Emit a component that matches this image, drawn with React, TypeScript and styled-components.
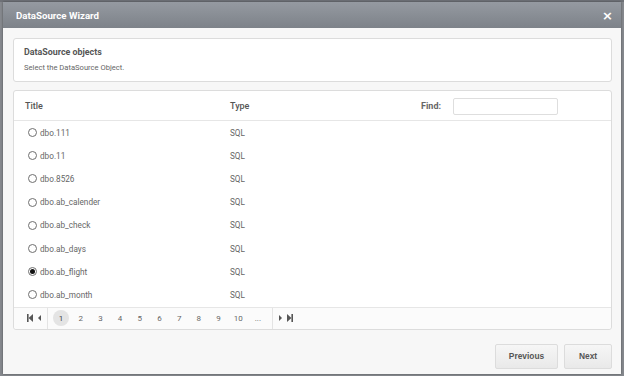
import React, { useState } from 'react';
import styled, { createGlobalStyle } from 'styled-components';

const GlobalStyle = createGlobalStyle`
  html, body {
    margin: 0;
    padding: 0;
    width: 624px;
    height: 376px;
    overflow: hidden;
    background: #7b7f85;
    font-family: Roboto, "Noto Sans", Arial, sans-serif;
  }
`;

const Backdrop = styled.div`
  width: 624px;
  height: 376px;
  padding: 2px 3px 2px 3px;
  box-sizing: border-box;
  background: linear-gradient(#6e7177 0, #6e7177 2px, #85888d 2px);
`;

const Modal = styled.div`
  height: 100%;
  display: flex;
  flex-direction: column;
  background: #f7f7f7;
  box-shadow: 0 0 2px rgba(0, 0, 0, 0.4);
`;

const Header = styled.div`
  height: 26px;
  flex-shrink: 0;
  display: flex;
  align-items: center;
  justify-content: space-between;
  padding: 0 8px 0 13px;
  background: linear-gradient(#959aa1, #7d8289);
  color: #fff;
`;

const HeaderTitle = styled.div`
  font-size: 9.7px;
  font-weight: 700;
`;

const CloseButton = styled.button`
  border: none;
  background: none;
  padding: 0;
  color: #fff;
  font-size: 13px;
  font-weight: 700;
  line-height: 1;
  cursor: pointer;
  font-family: "DejaVu Sans", sans-serif;
`;

const Body = styled.div`
  display: flex;
  flex-direction: column;
  gap: 8px;
  padding: 10px 9px 0 10px;
`;

const Panel = styled.div`
  background: #fff;
  border: 1px solid #dcdcdc;
  border-radius: 3px;
`;

const InfoPanel = styled(Panel)`
  height: 44px;
  padding: 8px 10px 0;
  box-sizing: border-box;
`;

const InfoTitle = styled.div`
  font-size: 8.9px;
  font-weight: 700;
  color: #555;
`;

const InfoText = styled.div`
  font-size: 7.6px;
  color: #666;
  margin-top: 6px;
`;

const TablePanel = styled(Panel)`
  display: flex;
  flex-direction: column;
`;

const TableHead = styled.div`
  height: 30px;
  display: grid;
  grid-template-columns: 205px 1fr auto;
  align-items: center;
  padding: 1px 53px 0 11px;
  box-sizing: border-box;
  border-bottom: 1px solid #e6e6e6;
  font-size: 9px;
  font-weight: 500;
  color: #555;
`;

const FindBox = styled.label`
  display: flex;
  align-items: center;
  gap: 12px;
  font-weight: 700;
  color: #666;
`;

const FindInput = styled.input`
  width: 105px;
  height: 17px;
  box-sizing: border-box;
  border: 1px solid #dedede;
  border-radius: 2px;
  padding: 0 4px;
  font-size: 9px;
  outline: none;
`;

const Row = styled.label`
  height: 23.2px;
  display: grid;
  grid-template-columns: 205px 1fr;
  align-items: center;
  padding: 0 11px;
  font-size: 8.2px;
  color: #666;
  cursor: pointer;
`;

const TitleCell = styled.span`
  display: flex;
  align-items: center;
  gap: 3px;
  padding-left: 3px;
`;

const Radio = styled.span<{ $checked: boolean }>`
  width: 9px;
  height: 9px;
  box-sizing: border-box;
  border: 1px solid #6f6f6f;
  border-radius: 50%;
  display: flex;
  align-items: center;
  justify-content: center;
  background: #fff;

  &::after {
    content: '';
    width: 5px;
    height: 5px;
    border-radius: 50%;
    background: ${p => (p.$checked ? '#111' : 'transparent')};
  }
`;

const Pager = styled.div`
  height: 21px;
  display: flex;
  align-items: center;
  border-top: 1px solid #e6e6e6;
  background: #fbfbfb;
  border-radius: 0 0 3px 3px;
  padding-left: 7px;
`;

const NavGroup = styled.div<{ $side: 'left' | 'right' }>`
  display: flex;
  align-items: center;
  gap: 5px;
  height: 100%;
  padding: 0 6px;
  ${p => (p.$side === 'left' ? 'border-right' : 'border-left')}: 1px solid #e4e4e4;
`;

const Pages = styled.div`
  display: flex;
  align-items: center;
  gap: 3.7px;
  padding: 0 6px 0 5px;
`;

const PageNum = styled.span<{ $active?: boolean }>`
  width: 16px;
  height: 16px;
  border-radius: 50%;
  display: flex;
  align-items: center;
  justify-content: center;
  font-size: 8px;
  color: ${p => (p.$active ? '#444' : '#666')};
  background: ${p => (p.$active ? '#e4e4e4' : 'transparent')};
`;

const Footer = styled.div`
  display: flex;
  justify-content: flex-end;
  gap: 6px;
  padding: 14px 9px 0 0;
`;

const FooterButton = styled.button<{ $w: number }>`
  width: ${p => p.$w}px;
  height: 25px;
  border: 1px solid #dcdcdc;
  border-radius: 2px;
  background: linear-gradient(#f6f6f6, #e9e9e9);
  color: #555;
  font-family: "Liberation Sans", Arial, sans-serif;
  font-size: 8.4px;
  font-weight: 700;
  cursor: pointer;
`;

const FirstIcon = () => (
  <svg width="6" height="8" viewBox="0 0 6 8">
    <rect x="0" y="0" width="1.6" height="8" fill="#555" />
    <path d="M6 0 L1.6 4 L6 8 Z" fill="#555" />
  </svg>
);

const PrevIcon = () => (
  <svg width="3" height="6" viewBox="0 0 3 6">
    <path d="M3 0 L0 3 L3 6 Z" fill="#555" />
  </svg>
);

const NextIcon = () => (
  <svg width="3" height="6" viewBox="0 0 3 6">
    <path d="M0 0 L3 3 L0 6 Z" fill="#555" />
  </svg>
);

const LastIcon = () => (
  <svg width="6" height="8" viewBox="0 0 6 8">
    <path d="M0 0 L4.4 4 L0 8 Z" fill="#555" />
    <rect x="4.4" y="0" width="1.6" height="8" fill="#555" />
  </svg>
);

const items = [
  'dbo.111',
  'dbo.11',
  'dbo.8526',
  'dbo.ab_calender',
  'dbo.ab_check',
  'dbo.ab_days',
  'dbo.ab_flight',
  'dbo.ab_month',
];

const pages = ['1', '2', '3', '4', '5', '6', '7', '8', '9', '10', '...'];

export default function App() {
  const [selected, setSelected] = useState('dbo.ab_flight');

  return (
    <>
      <GlobalStyle />
      <Backdrop>
        <Modal>
          <Header>
            <HeaderTitle>DataSource Wizard</HeaderTitle>
            <CloseButton>×</CloseButton>
          </Header>
          <Body>
            <InfoPanel>
              <InfoTitle>DataSource objects</InfoTitle>
              <InfoText>Select the DataSource Object.</InfoText>
            </InfoPanel>
            <TablePanel>
              <TableHead>
                <span>Title</span>
                <span>Type</span>
                <FindBox>
                  Find:
                  <FindInput />
                </FindBox>
              </TableHead>
              <div>
                {items.map(name => (
                  <Row key={name} onClick={() => setSelected(name)}>
                    <TitleCell>
                      <Radio $checked={selected === name} />
                      {name}
                    </TitleCell>
                    <span>SQL</span>
                  </Row>
                ))}
              </div>
              <Pager>
                <NavGroup $side="left">
                  <FirstIcon />
                  <PrevIcon />
                </NavGroup>
                <Pages>
                  {pages.map(p => (
                    <PageNum key={p} $active={p === '1'}>
                      {p}
                    </PageNum>
                  ))}
                </Pages>
                <NavGroup $side="right">
                  <NextIcon />
                  <LastIcon />
                </NavGroup>
              </Pager>
            </TablePanel>
          </Body>
          <Footer>
            <FooterButton $w={63}>Previous</FooterButton>
            <FooterButton $w={48}>Next</FooterButton>
          </Footer>
        </Modal>
      </Backdrop>
    </>
  );
}
